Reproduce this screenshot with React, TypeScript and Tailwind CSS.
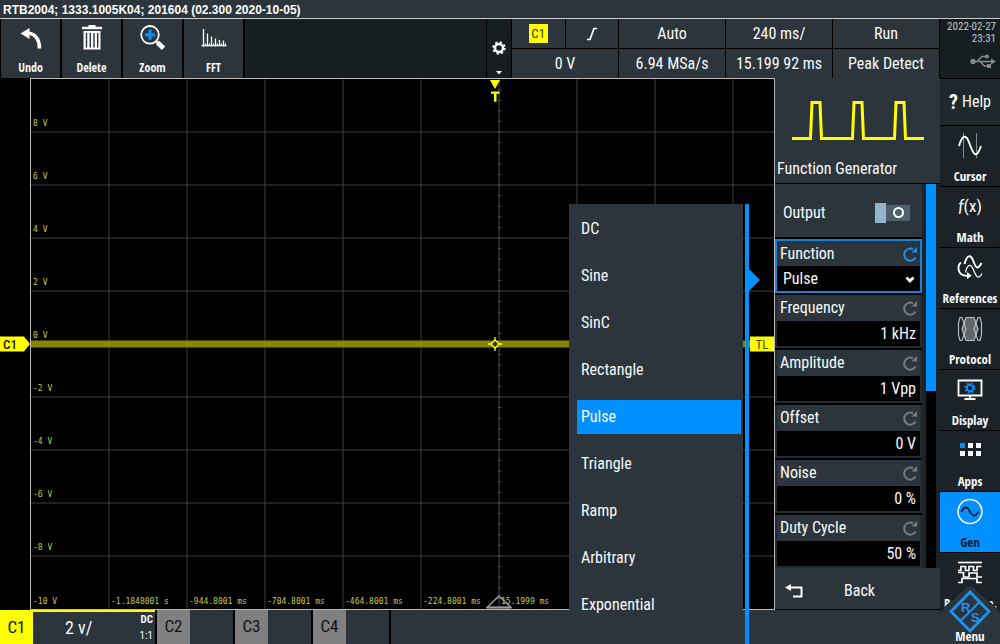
import { useState, type ReactNode } from 'react';

const timeColumns = ['-10 V', '-1.1848001 s', '-944.8001 ms', '-704.8001 ms', '-464.8001 ms', '-224.8001 ms', '15.1999 ms'];
const voltRows = ['8 V', '6 V', '4 V', '2 V', '0 V', '-2 V', '-4 V', '-6 V', '-8 V', ''];
const functions = ['DC', 'Sine', 'SinC', 'Rectangle', 'Pulse', 'Triangle', 'Ramp', 'Arbitrary', 'Exponential'];
const parameters = [
  { id: 'frequency', label: 'Frequency', value: '1 kHz' },
  { id: 'amplitude', label: 'Amplitude', value: '1 Vpp' },
  { id: 'offset', label: 'Offset', value: '0 V' },
  { id: 'noise', label: 'Noise', value: '0 %' },
  { id: 'duty', label: 'Duty Cycle', value: '50 %' },
];

function UndoIcon() {
  return (
    <svg className="h-7 w-7" viewBox="0 0 28 28" fill="none" aria-hidden="true">
      <path d="M3.500 8.500 12.500 3v11z" fill="#fff" />
      <path d="M10 8.200c7.500-.4 12.600 5.600 12.400 15.300" stroke="#fff" strokeWidth="3.600" />
    </svg>
  );
}

function TrashIcon() {
  return (
    <svg className="h-7 w-7" viewBox="0 0 28 28" fill="#fff" aria-hidden="true">
      <path d="M10.500 0h7v1.800H24v2.400H4V1.800h6.500z" />
      <path fillRule="evenodd" d="M5.500 6h17v18.500h-17zM7.800 8v14.500h1.400V8zm3.800 0v14.500H13V8zm3.700 0v14.500h1.400V8zm3.700 0v14.500h1.400V8z" />
    </svg>
  );
}

function ZoomIcon() {
  return (
    <svg className="h-7 w-7" viewBox="0 0 28 28" fill="none" aria-hidden="true">
      <circle cx="11" cy="9.800" r="8.800" stroke="#fff" strokeWidth="1.800" />
      <path d="M11 4.800v10M6 9.800h10" stroke="#0b8cf5" strokeWidth="3.200" />
      <path d="m16.800 15.800 2.500 2.500" stroke="#fff" strokeWidth="2" />
      <path d="m18.500 17.500 6 5.800" stroke="#fff" strokeWidth="4.800" />
    </svg>
  );
}

function FftIcon() {
  return (
    <svg className="h-7 w-7" viewBox="0 0 28 28" fill="none" stroke="#fff" aria-hidden="true">
      <path d="M1.500 20.500h25" strokeWidth="1.500" />
      <path d="M3.500 4v18M7.500 8.500v13M11.500 11.500v10M15.500 13.500v8M19.500 15v6M23.500 15.500v6" strokeWidth="1.300" />
      <path d="M5.500 18v3M9.500 18v3M13.500 18v3M17.500 18v3M21.500 18v3M25.500 18v3" strokeWidth=".7" />
    </svg>
  );
}

function GearIcon() {
  return (
    <svg className="h-[14px] w-[14px]" viewBox="0 0 14 14" fill="none" stroke="#fff" aria-hidden="true">
      <circle cx="7" cy="7" r="4" strokeWidth="2.400" />
      <circle cx="7" cy="7" r="5.800" strokeWidth="1.800" strokeDasharray="2.300 2.255" />
    </svg>
  );
}

function UsbIcon() {
  return (
    <svg className="h-4 w-[26px]" viewBox="0 0 26 16" fill="none" stroke="#858a8d" strokeWidth="1.500" aria-hidden="true">
      <circle cx="3" cy="8.500" r="2.700" fill="#858a8d" stroke="none" />
      <path d="M3 8.500h19M7 8.500 12 3.500h4M10 8.500l4.500 4.500h4" />
      <path d="m21 5.500 5 3-5 3z" fill="#858a8d" stroke="none" />
      <circle cx="17" cy="3.500" r="2" fill="#858a8d" stroke="none" />
      <path d="M17 11h4v4h-4z" fill="#858a8d" stroke="none" />
    </svg>
  );
}

function PulseTrain() {
  return (
    <svg className="h-[44px] w-[132px]" viewBox="0 0 132 44" fill="none" stroke="#ffff00" strokeWidth="3" aria-hidden="true">
      <path d="M0 40.500h18.500L20 4.500h8l1.500 36h31l1.500-36h8l1.500 36h31L104 4.500h8l1.500 36H132" />
    </svg>
  );
}

function CursorIcon() {
  return (
    <svg className="h-7 w-7" viewBox="0 0 28 28" fill="none" aria-hidden="true">
      <path d="M7.500 1v25M20.500 1v25" stroke="#858a8d" />
      <path d="M3 14C6 3 10 1.500 13.500 11.500s6.500 17 11.500 2.500" stroke="#fff" strokeWidth="1.900" />
    </svg>
  );
}

function MathIcon() {
  return (
    <svg className="h-7 w-7" viewBox="0 0 28 28" fill="#fff" aria-hidden="true">
      <text x="14" y="19" textAnchor="middle" fontSize="17" fontFamily="Roboto Condensed, sans-serif">
        <tspan fontStyle="italic" fontFamily="Lato, sans-serif">f</tspan>(x)
      </text>
    </svg>
  );
}

function ReferencesIcon() {
  return (
    <svg className="h-7 w-7" viewBox="0 0 28 28" fill="none" stroke="#fff" aria-hidden="true">
      <path d="M5 8.500C1 11.500 1.500 20 8.500 21.500l3.500.2" strokeWidth="1.900" />
      <path d="m11 18 4.700 3.700L11 25z" fill="#fff" stroke="none" />
      <path d="M8.500 10C11 .5 14.800 0 17.500 7.500s4.500 8 8 1.500" strokeWidth="2" />
      <path d="M9.500 18.500c2-9 5.500-9 8-2.500s5 10.500 8.500 3.500" strokeWidth="1.200" />
    </svg>
  );
}

function ProtocolIcon() {
  return (
    <svg className="h-7 w-7" viewBox="0 0 28 28" fill="none" stroke="#b8bcbe" strokeWidth="1.200" aria-hidden="true">
      <path d="M10 2.500h8L22 14l-4 11.500h-8L6 14z" fill="#5f6568" />
      <path d="M6 2.500H4L2.500 8v12L4 25.500h2L10 14zM22 2.500h2L25.500 8v12L24 25.500h-2L18 14z" />
    </svg>
  );
}

function DisplayIcon() {
  return (
    <svg className="h-7 w-7" viewBox="0 0 28 28" fill="none" aria-hidden="true">
      <path d="M2.500 4.500h23v15h-23z" stroke="#fff" strokeWidth="1.800" />
      <path d="M14 19v3.500M8.500 23h11" stroke="#fff" strokeWidth="2" />
      <circle cx="14" cy="12" r="3.200" stroke="#0b8cf5" strokeWidth="2" />
      <circle cx="14" cy="12" r="4.700" stroke="#0b8cf5" strokeWidth="1.600" strokeDasharray="1.850 1.840" />
    </svg>
  );
}

function AppsIcon() {
  return (
    <svg className="h-7 w-7" viewBox="0 0 28 28" fill="#fff" aria-hidden="true">
      <path d="M4 6h5v5H4z" fill="#0b8cf5" />
      <path d="M12 6h5v5h-5zM20 6h5v5h-5zM4 14h5v5H4zM12 14h5v5h-5zM20 14h5v5h-5z" />
    </svg>
  );
}

function GenIcon() {
  return (
    <svg className="h-7 w-7" viewBox="0 0 28 28" fill="none" aria-hidden="true">
      <circle cx="14" cy="13.500" r="12" stroke="#fff" strokeWidth="1.500" />
      <path d="M5.500 14c2-5.500 5.500-6.500 8-1s6 6.500 9 .500" stroke="#10181d" strokeWidth="1.600" />
    </svg>
  );
}

function PatternIcon() {
  return (
    <svg className="h-7 w-7" viewBox="0 0 28 28" fill="none" stroke="#fff" strokeWidth="1.700" aria-hidden="true">
      <path d="M2 3.500h24" />
      <path d="M2 11.500h3v-4h4.500v4h3.500v-4h4.500v4h3.500v-4h4.500" />
      <path d="M2 13.500h5.500v4.500h5.500v-4h8v4h5" />
      <path d="M2 23.500h4v-4h15v4h5" />
    </svg>
  );
}

function ResetIcon({ className }: { className: string }) {
  return (
    <svg className={className} viewBox="0 0 16 16" fill="none" stroke="currentColor" aria-hidden="true">
      <path d="M13.500 11.500A6 6 0 1 1 11 3.300" strokeWidth="2" />
      <path d="M9.500 6.500h5.500V1z" fill="currentColor" stroke="none" />
    </svg>
  );
}

function BackIcon() {
  return (
    <svg className="h-4 w-[18px]" viewBox="0 0 18 16" fill="none" aria-hidden="true">
      <path d="M4 4.500h12.500v9H8" stroke="#fff" strokeWidth="2" />
      <path d="M0 4.500 6 1v7z" fill="#fff" />
    </svg>
  );
}

function ToolButton({ label, children }: { label: string; children: ReactNode }) {
  return (
    <button type="button" className="flex w-[59px] shrink-0 flex-col items-center justify-between bg-[#2b353b] pt-1.5 pb-0.5">
      {children}
      <span className="font-['Open_Sans_Condensed',sans-serif] text-xs font-bold">{label}</span>
    </button>
  );
}

function SideButton({ label, active, children }: { label: ReactNode; active?: boolean; children: ReactNode }) {
  return (
    <button
      type="button"
      className={
        active
          ? 'flex h-[60px] shrink-0 flex-col items-center justify-between bg-[#0090ff] pt-1.5 text-[#0a1a26]'
          : 'flex h-[60px] shrink-0 flex-col items-center justify-between bg-[#1b2328] pt-1.5'
      }
    >
      {children}
      <span className="flex w-full justify-center font-['Open_Sans_Condensed',sans-serif] text-[13px] leading-5 font-bold">{label}</span>
    </button>
  );
}

function InfoCell({ top, bottom }: { top: ReactNode; bottom: string }) {
  return (
    <div className="grid w-[106px] grid-rows-2 gap-px">
      <div className="flex items-center justify-center bg-[#2b353b]">{top}</div>
      <div className="flex items-center justify-center bg-[#2b353b]">{bottom}</div>
    </div>
  );
}

function Graticule() {
  const columns = [78, 156, 234, 312, 390, 546, 624, 702];
  const rows = [1, 2, 3, 4, 5, 6, 7, 8, 9];
  const ticks = Array.from({ length: 49 }, (_, i) => (i + 1) * 2);
  return (
    <svg className="absolute inset-0 h-full w-full" aria-hidden="true">
      {columns.map((x) => (
        <line key={x} x1={`${x / 7.43}%`} x2={`${x / 7.43}%`} y1="0" y2="100%" stroke="#3f3f3f" />
      ))}
      {rows.map((r) => (
        <line key={r} x1="0" x2="100%" y1={`${r * 10}%`} y2={`${r * 10}%`} stroke="#3f3f3f" />
      ))}
      <line x1="63%" x2="63%" y1="0" y2="100%" stroke="#4a4a4a" />
      {ticks.map((t) => (
        <line key={t} x1="62.8%" x2="63.3%" y1={`${t}%`} y2={`${t}%`} stroke="#4a4a4a" />
      ))}
    </svg>
  );
}

function Plot() {
  return (
    <div className="flex min-h-0 flex-1 bg-black">
      <div className="flex w-[30px] shrink-0 items-center">
        <svg className="h-4 w-[30px]" viewBox="0 0 30 16" aria-label="Channel 1 position">
          <path d="M0 .5h24L30 8l-6 7.500H0z" fill="#ffff00" />
          <text x="3" y="13" fontSize="13" fontFamily="Roboto Condensed, sans-serif" fontWeight="500" fill="#1a1a00">C1</text>
        </svg>
      </div>
      <div className="relative flex-1 border border-[#b8b8b8]">
        <Graticule />
        <div className="absolute inset-x-0 top-1/2 h-[7px] -translate-y-1/2 bg-[#8a8500]" />
        <div className="absolute inset-0 grid grid-rows-10 pl-0.5 font-['DejaVu_Sans_Mono',monospace] text-[8px] leading-[9px] text-[#c3ca4c]">
          {voltRows.map((v) => (
            <div key={v} className="flex items-end pb-1">{v}</div>
          ))}
        </div>
        <div className="absolute inset-x-0 bottom-[3px] grid grid-cols-[repeat(9,78fr)_41fr] font-['DejaVu_Sans_Mono',monospace] text-[8px] leading-[9px] whitespace-nowrap text-[#c3ca4c]">
          {timeColumns.map((c) => (
            <div key={c} className="pl-0.5">{c}</div>
          ))}
        </div>
        <svg className="absolute top-0 left-[63%] h-6 w-[14px] -translate-x-[11px]" viewBox="0 0 14 24" fill="#ffff00" aria-hidden="true">
          <path d="M2 1h10L7 10z" />
          <path d="M3 12.500h8.500v2.200h-3v8h-2.500v-8H3z" />
        </svg>
        <svg className="absolute top-1/2 left-[63%] h-[14px] w-[14px] -translate-x-[11px] -translate-y-1/2" viewBox="0 0 14 14" aria-hidden="true">
          <path d="M7 3 11 7l-4 4-4-4z" fill="#3c3a00" stroke="#ffff20" strokeWidth="1.300" />
          <path d="M7 0v3M7 11v3M0 7h3M11 7h3" stroke="#ffff20" strokeWidth="1.300" />
        </svg>
        <svg className="absolute bottom-0 left-[63%] h-[14px] w-[26px] -translate-x-1/2" viewBox="0 0 26 14" fill="none" aria-hidden="true">
          <path d="M1 12.500 13 1l12 11.500z" stroke="#9a9a9a" strokeWidth="1.500" />
          <path d="M1 12.500h24" stroke="#9a9a9a" strokeWidth="2" />
        </svg>
        <span className="absolute top-1/2 right-0 flex h-[15px] w-6 -translate-y-1/2 items-center justify-center bg-[#ffff00] text-[13px] text-[#4a4a00]">TL</span>
      </div>
    </div>
  );
}

function ChannelTab({ name }: { name: string }) {
  return (
    <button type="button" className="flex w-[76px] bg-[#2b353b] text-left">
      <span className="flex w-[33px] items-center justify-center self-stretch bg-[#808080] text-[17px] text-[#101010]">{name}</span>
    </button>
  );
}

export default function App() {
  const [selected, setSelected] = useState('Pulse');
  return (
    <div className="flex h-screen min-h-[644px] flex-col overflow-hidden bg-black font-['Roboto_Condensed','Liberation_Sans',sans-serif] text-base text-[#f8fafb]">
      <h1 className="h-[19px] shrink-0 border-b border-[#c8ccce] bg-[#2b353b] pl-[3px] font-['Liberation_Sans',sans-serif] text-xs leading-5 font-bold text-white">
        RTB2004; 1333.1005K04; 201604 (02.300 2020-10-05)
      </h1>

      <header className="flex h-[59px] shrink-0 gap-px bg-black">
        <nav className="flex flex-1 gap-0.5 bg-black pl-px">
          <ToolButton label="Undo"><UndoIcon /></ToolButton>
          <ToolButton label="Delete"><TrashIcon /></ToolButton>
          <ToolButton label="Zoom"><ZoomIcon /></ToolButton>
          <ToolButton label="FFT"><FftIcon /></ToolButton>
          <div className="flex-1 bg-[#171e22]" />
        </nav>
        <button type="button" aria-label="Toolbar settings" className="flex w-6 flex-col items-center justify-between bg-[#171e22] pt-[22px] pb-[3px]">
          <GearIcon />
          <svg className="h-1 w-2" viewBox="0 0 8 4" fill="#fff" aria-hidden="true"><path d="M1 0h6L4 3.500z" /></svg>
        </button>
        <div className="flex gap-px">
          <div className="grid w-[106px] grid-cols-2 grid-rows-2 gap-px">
            <div className="flex items-center justify-center bg-[#2b353b]">
              <span className="flex h-[19px] w-[19px] items-center justify-center bg-[#ffff00] text-[13px] text-[#404000]">C1</span>
            </div>
            <div className="flex items-center justify-center bg-[#2b353b]">
              <svg className="h-[14px] w-3" viewBox="0 0 12 14" fill="none" stroke="#fff" strokeWidth="1.700" aria-label="Rising edge"><path d="M1 12.500h3L8 1.500h3" /></svg>
            </div>
            <div className="col-span-2 flex items-center justify-center bg-[#2b353b]">0 V</div>
          </div>
          <InfoCell top="Auto" bottom="6.94 MSa/s" />
          <InfoCell top="240 ms/" bottom="15.199 92 ms" />
          <InfoCell top="Run" bottom="Peak Detect" />
        </div>
        <div className="flex w-[60px] flex-col items-end bg-[#171e22] pt-0.5 pr-1 text-[11px] leading-3 text-[#c6cacc]">
          <span className="whitespace-nowrap">2022-02-27</span>
          <span>23:31</span>
          <div className="pt-2"><UsbIcon /></div>
        </div>
      </header>

      <div className="flex min-h-0 flex-1">
        <main className="relative flex min-w-0 flex-1 flex-col">
          <Plot />
          <footer className="flex h-[34px] shrink-0 gap-0.5 bg-black">
            <button type="button" className="flex w-[155px] border-t-2 border-[#ffff00] bg-[#2b353b] text-left">
              <span className="flex w-[33px] items-center justify-center self-stretch bg-[#ffff00] text-[17px] text-[#101010]">C1</span>
              <span className="flex-1 self-center pl-8 text-lg">2 v/</span>
              <span className="flex h-full flex-col items-end justify-between pr-0.5 text-[11px] leading-4">
                <b>DC</b>
                <span>1:1</span>
              </span>
            </button>
            <ChannelTab name="C2" />
            <ChannelTab name="C3" />
            <ChannelTab name="C4" />
            <div className="flex-1 bg-[#2b353b]" />
          </footer>

          <div className="absolute top-[126px] right-[14px] bottom-0 flex w-[192px]">
            <ul role="listbox" aria-label="Function" className="flex flex-1 flex-col gap-[13px] overflow-hidden bg-[#2b353b] pt-2 pr-0.5 pl-2">
              {functions.map((f) => (
                <li key={f} role="option" aria-selected={f === selected}>
                  <button
                    type="button"
                    onClick={() => setSelected(f)}
                    className={
                      f === selected
                        ? 'h-[34px] w-full bg-[#0090ff] pl-1 text-left'
                        : 'h-[34px] w-full pl-1 text-left'
                    }
                  >
                    {f}
                  </button>
                </li>
              ))}
            </ul>
            <div className="ml-0.5 w-1 bg-[#0090ff]" />
            <svg className="mt-[65px] h-[22px] w-3" viewBox="0 0 12 22" fill="#0090ff" aria-hidden="true"><path d="M0 0 11 11 0 22z" /></svg>
          </div>
        </main>

        <aside className="flex w-[165px] shrink-0 flex-col bg-[#2b353b]">
          <div className="flex h-[106px] shrink-0 flex-col items-center justify-between border-b border-black pt-5 pb-0.5">
            <PulseTrain />
            <h2 className="w-full pl-0.5">Function Generator</h2>
          </div>

          <div className="flex min-h-0 flex-1">
            <div className="flex w-[147px] flex-col gap-0.5 bg-black">
              <div className="flex h-[53px] shrink-0 items-center justify-between bg-[#2b353b] pt-1 pr-3 pl-2">
                <label htmlFor="output">Output</label>
                <span className="relative flex h-5 w-[35px] items-center">
                  <input id="output" type="checkbox" className="absolute inset-0 h-full w-full cursor-pointer opacity-0" />
                  <span className="h-5 w-[11px] bg-[#8fb4cc]" />
                  <span className="flex h-4 flex-1 items-center justify-center bg-[#4c606e]">
                    <span className="h-[11px] w-[11px] rounded-full border-2 border-white" />
                  </span>
                </span>
              </div>

              <div className="flex h-[54px] shrink-0 flex-col border-2 border-[#1583d8] bg-black">
                <div className="flex h-[25px] shrink-0 items-center justify-between bg-[#2b353b] pr-0.5 pl-[3px]">
                  <label htmlFor="function">Function</label>
                  <button type="button" aria-label="Reset function"><ResetIcon className="h-4 w-4 text-[#1b93f5]" /></button>
                </div>
                <div className="relative h-[25px]">
                  <select
                    id="function"
                    value={selected}
                    onChange={(e) => setSelected(e.target.value)}
                    className="h-full w-full appearance-none bg-black pl-1.5 outline-none"
                  >
                    {functions.map((f) => (
                      <option key={f}>{f}</option>
                    ))}
                  </select>
                  <svg className="pointer-events-none absolute top-2.5 right-[5px] h-2 w-2.5" viewBox="0 0 10 8" fill="none" stroke="#fff" strokeWidth="2.800" aria-hidden="true">
                    <path d="m1.500 1.500 3.500 3.500 3.500-3.500" />
                  </svg>
                </div>
              </div>

              {parameters.map((p) => (
                <div key={p.id} className="flex h-[53px] shrink-0 flex-col border-x-2 border-b-2 border-[#222b30] bg-black">
                  <div className="flex h-[26px] shrink-0 items-center justify-between bg-[#2b353b] pr-0.5 pl-[3px]">
                    <label htmlFor={p.id}>{p.label}</label>
                    <button type="button" aria-label={`Reset ${p.label}`}><ResetIcon className="h-4 w-4 text-[#767c80]" /></button>
                  </div>
                  <input id={p.id} defaultValue={p.value} className="h-[25px] w-full bg-black pr-1 text-right outline-none" />
                </div>
              ))}
            </div>
            <div className="w-1 bg-[#1b2328]" />
            <div className="w-2.5 bg-black">
              <div className="h-[54%] bg-[#0090ff]" />
            </div>
            <div className="w-1 bg-[#1b2328]" />
          </div>

          <button type="button" className="flex h-[42px] shrink-0 items-center border-b border-black pt-1 pl-2.5">
            <BackIcon />
            <span className="flex-1 pr-6 text-center">Back</span>
          </button>
          <div className="h-[34px] shrink-0" />
        </aside>

        <nav className="relative flex w-[60px] shrink-0 flex-col gap-px overflow-hidden bg-black pt-px">
          <button type="button" className="flex h-[46px] shrink-0 items-center justify-center gap-1 bg-[#1f282d]">
            <b className="text-xl">?</b>
            <span>Help</span>
          </button>
          <SideButton label="Cursor"><CursorIcon /></SideButton>
          <SideButton label="Math"><MathIcon /></SideButton>
          <SideButton label="References"><ReferencesIcon /></SideButton>
          <SideButton label="Protocol"><ProtocolIcon /></SideButton>
          <SideButton label="Display"><DisplayIcon /></SideButton>
          <SideButton label="Apps"><AppsIcon /></SideButton>
          <SideButton label="Gen" active><GenIcon /></SideButton>
          <SideButton label={<span className="flex w-full justify-between pr-[3px] pl-1"><span>P</span><span>n.</span></span>}><PatternIcon /></SideButton>
          <div className="flex-1 bg-[#1b2328]" />
          <button type="button" className="absolute inset-x-0 bottom-0 flex h-[60px] items-end justify-center">
            <svg className="absolute inset-0 h-full w-full" viewBox="0 0 60 60" aria-hidden="true">
              <path d="M0 60V28L26 3q4-3 8 0l26 25v32z" fill="#2b353b" />
              <path d="M0 28 26 3q4-3 8 0l26 25" fill="none" stroke="#151c20" />
              <path d="M30 8 49 27.500 30 47 11 27.500z" fill="none" stroke="#1b93f5" strokeWidth="2.800" />
              <path d="m20.500 37 19-19" stroke="#1b93f5" strokeWidth="2" />
              <text x="21" y="28" fontSize="13" fontWeight="700" fontFamily="Liberation Sans, sans-serif" fill="#1b93f5">R</text>
              <text x="31" y="38" fontSize="13" fontWeight="700" fontFamily="Liberation Sans, sans-serif" fill="#1b93f5">S</text>
            </svg>
            <span className="relative font-['Open_Sans_Condensed',sans-serif] text-[13px] leading-4 font-bold">Menu</span>
          </button>
        </nav>
      </div>
    </div>
  );
}
